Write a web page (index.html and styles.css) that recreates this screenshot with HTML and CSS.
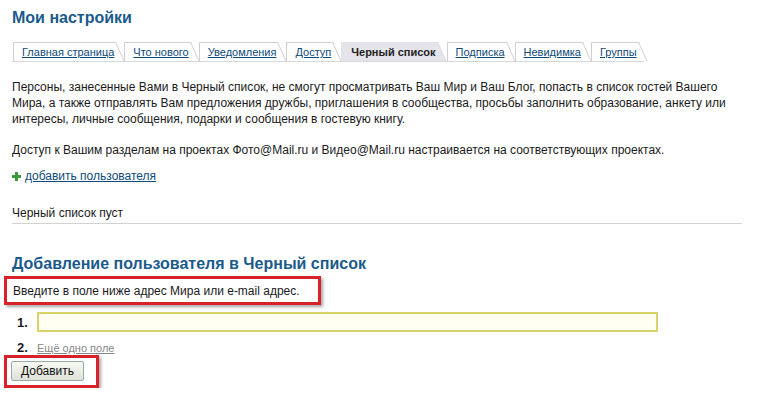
FILE: index.html
```html
<!DOCTYPE html>
<html>
<head>
    <title>Мои настройки</title>
    <link rel="stylesheet" href="styles.css">
</head>
<body>
    <div class="page">
        <h1 class="title">Мои настройки</h1>

        <ul class="tabs">
            <li class="tab"><a href="#">Главная страница</a></li>
            <li class="tab"><a href="#">Что нового</a></li>
            <li class="tab"><a href="#">Уведомления</a></li>
            <li class="tab"><a href="#">Доступ</a></li>
            <li class="tab active"><span>Черный список</span></li>
            <li class="tab"><a href="#">Подписка</a></li>
            <li class="tab"><a href="#">Невидимка</a></li>
            <li class="tab"><a href="#">Группы</a></li>
        </ul>

        <p class="text">Персоны, занесенные Вами в Черный список, не смогут просматривать Ваш Мир и Ваш Блог, попасть в список гостей Вашего Мира, а также отправлять Вам предложения дружбы, приглашения в сообщества, просьбы заполнить образование, анкету или интересы, личные сообщения, подарки и сообщения в гостевую книгу.</p>
        <p class="text">Доступ к Вашим разделам на проектах Фото@Mail.ru и Видео@Mail.ru настраивается на соответствующих проектах.</p>

        <div class="add-link">
            <svg class="plus" width="9" height="9" viewBox="0 0 9 9">
                <path d="M3 0h3v3h3v3H6v3H3V6H0V3h3z" fill="#3a9a3a"/>
            </svg>
            <a href="#">добавить пользователя</a>
        </div>

        <div class="empty">Черный список пуст</div>

        <h2 class="subtitle">Добавление пользователя в Черный список</h2>
        <div class="marked hint">Введите в поле ниже адрес Мира или e-mail адрес.</div>

        <div class="field-row">
            <span class="num">1.</span>
            <input class="field" type="text">
        </div>
        <div class="field-row more">
            <span class="num">2.</span>
            <a href="#" class="more-link">Ещё одно поле</a>
        </div>
        <div class="marked submit">
            <button class="btn">Добавить</button>
        </div>
    </div>
</body>
</html>
```

FILE: styles.css
```css
body { margin: 0; background: #fff; font-family: "Liberation Sans", Arial, sans-serif; font-size: 12px; color: #1a1a1a; }
a { color: #0e4a7a; }
.page { padding: 8px 17px 0 12px; }

.title { margin: 0; font-size: 16px; font-weight: bold; color: #1b5a8c; line-height: 20px; }

.tabs { list-style: none; margin: 14px 0 0; padding: 0 0 0 1px; display: flex; width: 631px; border-bottom: 1px solid #d8d8d8; font-size: 11px; }
.tab { position: relative; flex-shrink: 0; white-space: nowrap; height: 18px; line-height: 19px; padding: 0 2px 0 8px; margin-right: 8px; border-left: 1px solid #d0d0d0; border-top: 1px solid #d0d0d0; background: #fff; }
.tab::after { content: ""; position: absolute; top: -1px; right: 0; width: 10px; height: 18px; border-top: 1px solid #d0d0d0; border-right: 1px solid #d0d0d0; background: inherit; transform: skewX(24deg); transform-origin: top left; }
.tab a { color: #0e4a7a; position: relative; z-index: 1; }
.tab.active { background: #e4e4ea; border-color: #e4e4ea; font-weight: bold; padding: 0 2px 0 9px; margin-right: 9px; }
.tab.active::after { border-color: #e0e0e6; }
.tab.active span { color: #222; position: relative; z-index: 1; }

.text { margin: 17px 0 0; line-height: 16px; }
.text + .text { margin-top: 15px; }

.add-link { display: flex; align-items: center; gap: 4px; margin-top: 11px; }
.plus { display: block; }

.empty { margin-top: 23px; padding-bottom: 3px; border-bottom: 1px solid #d2d2d2; }

.subtitle { margin: 30px 0 0; font-size: 16px; color: #1b5a8c; line-height: 19px; }

.marked { border: 3px solid #d8222a; box-shadow: 2px 2px 3px rgba(0,0,0,0.35); }
.hint { width: 305px; margin: 3px 0 0 -8px; padding: 5px 0 4px 6px; }

.field-row { display: flex; align-items: center; margin-top: 7px; }
.num { width: 20px; padding-left: 5px; font-weight: bold; font-size: 13px; }
.field { width: 613px; height: 14px; margin: 0; border: 2px solid #d8d36a; background: #fffff2; }
.more { margin-top: 8px; }
.more-link { color: #888; font-size: 11px; }

.submit { width: 85px; margin: 0 0 0 -8px; padding: 3px 0 4px 4px; }
.btn { font-family: "Liberation Sans", Arial, sans-serif; font-size: 12px; padding: 2px 9px; border: 1px solid #9aa; border-radius: 2px; background: linear-gradient(#f8f8f2, #dfe2d8); color: #111; }
```
